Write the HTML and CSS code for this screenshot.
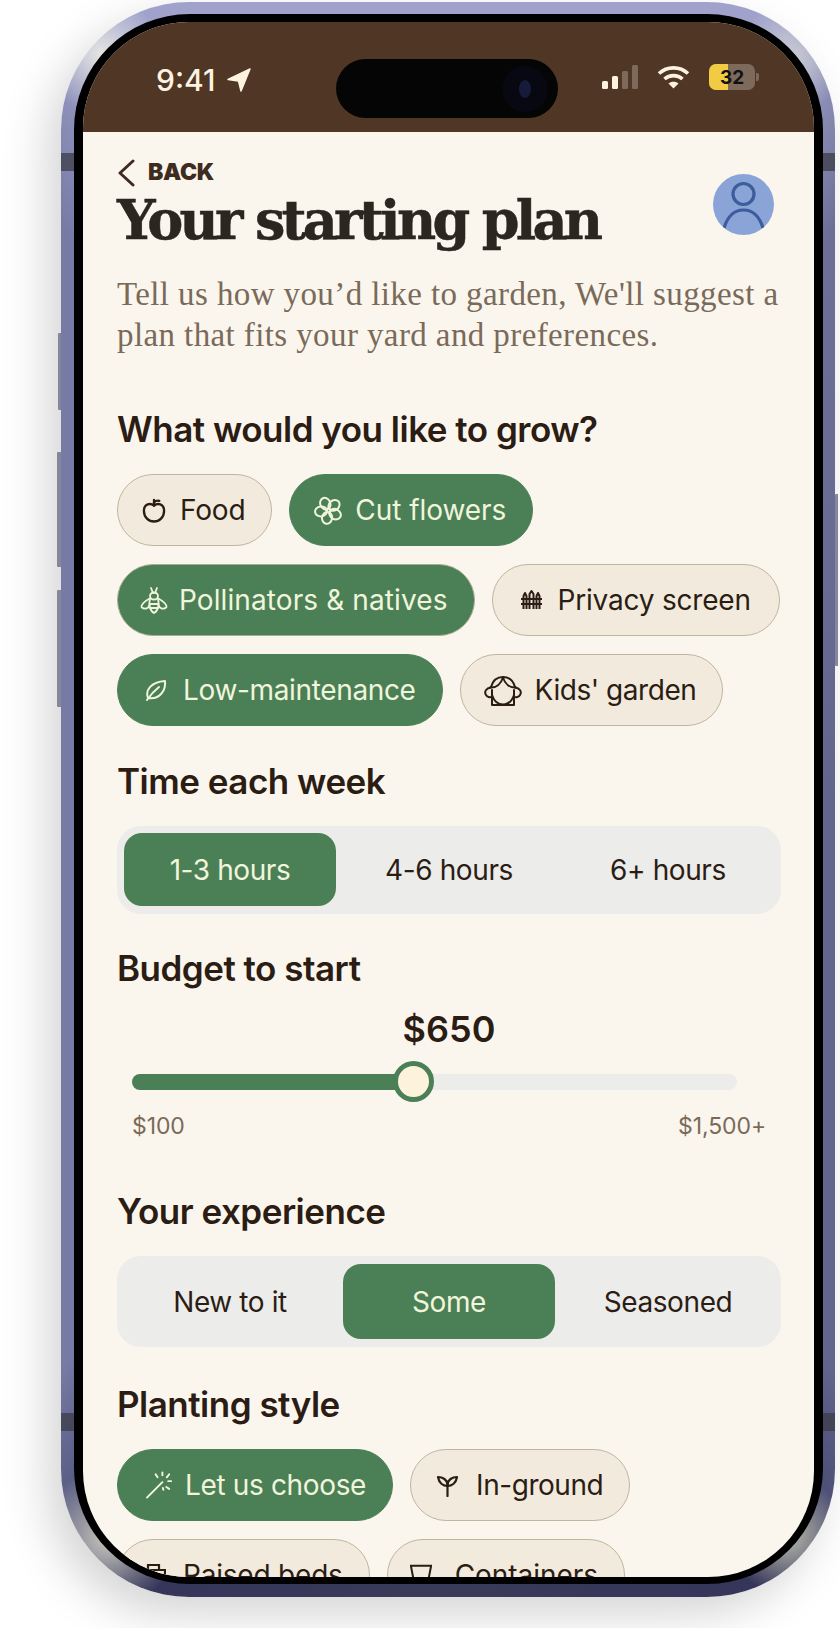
FILE: index.html
```html
<!DOCTYPE html>
<html lang="en">
<head>
<meta charset="utf-8">
<title>Your starting plan</title>
<link rel="stylesheet" href="styles.css">
</head>
<body>
<div class="stage">
  <div class="phone">
    <span class="btn btn-a"></span><span class="btn btn-b"></span><span class="btn btn-c"></span><span class="btn btn-d"></span>
    <span class="band band-tl"></span><span class="band band-tr"></span><span class="band band-bl"></span><span class="band band-br"></span>
    <div class="bezel">
      <div class="screen">
        <header class="status">
          <div class="status-left">
            <span class="clock">9:41</span>
            <svg class="loc" width="24" height="24" viewBox="0 0 24 24"><path d="M23 1 L1 11.5 L11.5 13 L14 23 Z" fill="currentColor" stroke="currentColor" stroke-width="1.5" stroke-linejoin="round"/></svg>
          </div>
          <div class="island"><span class="camera"><span class="lens"></span></span></div>
          <div class="status-right">
            <svg width="36" height="24" viewBox="0 0 36 24"><rect x="0" y="16" width="6" height="8" rx="1.5" fill="#fdf3e0"/><rect x="10" y="11" width="6" height="13" rx="1.5" fill="#fdf3e0"/><rect x="20" y="6" width="6" height="18" rx="1.5" fill="#7d6a5b"/><rect x="30" y="0" width="6" height="24" rx="1.5" fill="#7d6a5b"/></svg>
            <svg class="wifi" width="33" height="24" viewBox="0 0 33 24" fill="none" stroke="#fdf3e0" stroke-width="3.6"><path d="M2 8.5 C10 1 23 1 31 8.5"/><path d="M7.5 14 C12.5 9.5 20.5 9.5 25.5 14"/><path d="M16.5 23.5 L11.5 18.5 C14 16.3 19 16.3 21.5 18.5 Z" fill="#fdf3e0" stroke="none"/></svg>
            <div class="battery"><span class="battery-fill"></span><span class="battery-num">32</span><span class="battery-nub"></span></div>
          </div>
        </header>
        <main class="content">
          <div class="top">
            <div>
              <a class="back"><svg width="18" height="28" viewBox="0 0 18 28" fill="none" stroke="currentColor" stroke-width="3" stroke-linecap="round" stroke-linejoin="round"><path d="M16 2 L3 14 L16 26"/></svg><span>BACK</span></a>
              <h1 class="title">Your starting plan</h1>
            </div>
            <div class="avatar"><svg width="61" height="61" viewBox="0 0 61 61" fill="none" stroke="#3c5c9c" stroke-width="3.2"><circle cx="30.5" cy="20" r="10.5"/><path d="M11 54 C15 41 22 36 30.5 36 C39 36 46 41 50 54"/></svg></div>
          </div>
          <p class="lede">Tell us how you’d like to garden, We'll suggest a plan that fits your yard and preferences.</p>

          <h2 class="heading h-grow">What would you like to grow?</h2>
          <div class="chips">
            <span class="chip"><svg class="i-food" width="24" height="26" viewBox="0 0 25 26" fill="none" stroke="currentColor" stroke-width="2.4" stroke-linecap="round" stroke-linejoin="round"><path d="M12.5 8.500 C9 5.500 2 6 2 14 C2 20.500 7 25 12.500 25 C18 25 23 20.500 23 14 C23 6 16 5.500 12.500 8.500 Z"/><path d="M12.500 8.500 V2.500"/><path d="M12.500 5 C14 3.500 16 3 18 3.500"/></svg>Food</span>
            <span class="chip on chip-loose"><svg class="i-cut" width="29" height="29" viewBox="0 0 29 29" fill="none" stroke="currentColor" stroke-width="2"><ellipse cx="14.500" cy="7" rx="5" ry="6" transform="rotate(-25 14.500 14.500)"/><ellipse cx="14.500" cy="7" rx="5" ry="6" transform="rotate(47 14.500 14.500)"/><ellipse cx="14.500" cy="7" rx="5" ry="6" transform="rotate(119 14.500 14.500)"/><ellipse cx="14.500" cy="7" rx="5" ry="6" transform="rotate(191 14.500 14.500)"/><ellipse cx="14.500" cy="7" rx="5" ry="6" transform="rotate(263 14.500 14.500)"/><circle cx="14.500" cy="14.500" r="2"/></svg>Cut flowers</span>
            <span class="chip on chip-wide"><svg class="i-bee" width="28" height="27" viewBox="0 0 28 27" fill="none" stroke="currentColor" stroke-width="1.800" stroke-linecap="round" stroke-linejoin="round"><path d="M11 1 L13 6 M17 1 L15 6"/><ellipse cx="14" cy="9" rx="4" ry="3.500"/><path d="M10.500 11 C7 13 3 15 1.500 19 C1 21 4 22 6.500 21.500 C8 21 9 20 9.500 18"/><path d="M17.500 11 C21 13 25 15 26.500 19 C27 21 24 22 21.500 21.500 C20 21 19 20 18.500 18"/><path d="M10 12.500 C8.500 17 10 24 14 26 C18 24 19.500 17 18 12.500"/><path d="M9.500 17 H18.500 M10 21 H18"/></svg>Pollinators &amp; natives</span>
            <span class="chip chip-fence"><svg class="i-fence" width="21" height="20" viewBox="0 0 21 20" fill="none" stroke="currentColor" stroke-width="2" stroke-linejoin="round"><path d="M2.500 19 V6 L4 3 L5.500 6 V19 M8.500 19 V4 L10.500 1 L12.500 4 V19 M15.500 19 V6 L17 3 L18.500 6 V19"/><path d="M0 9 H21 M0 14 H21"/></svg>Privacy screen</span>
            <span class="chip on chip-snug"><svg class="i-leaf" width="22" height="22" viewBox="0 0 22 22" fill="none" stroke="currentColor" stroke-width="2" stroke-linejoin="round" stroke-linecap="round"><path d="M3 19 C0 11 6 3 20 2 C21 12 14 21 3 19 Z"/><path d="M2 21 C6 15 9 12 14 8"/></svg>Low-maintenance</span>
            <span class="chip chip-tight"><svg class="i-kids" width="38" height="31" viewBox="0 0 38 31" fill="none" stroke="currentColor" stroke-width="2" stroke-linejoin="round" stroke-linecap="round"><path d="M7 12 C9 5 14 2 19 2 C24 2 29 5 31 12"/><path d="M19 2.500 C17 9 12 13 6 12.500"/><path d="M19 2.500 C21 9 26 13 32 12.500"/><path d="M7 12.500 C2 13 0 17 2 20 C3 22 6 23 8 21.500"/><path d="M31 12.500 C36 13 38 17 36 20 C35 22 32 23 30 21.500"/><path d="M8 15 V30 H30 V15"/><path d="M8 20 C10 26 14 29.500 19 29.500 C24 29.500 28 26 30 20"/></svg>Kids' garden</span>
          </div>

          <h2 class="heading h-time">Time each week</h2>
          <div class="seg">
            <span class="seg-item on">1-3 hours</span>
            <span class="seg-item">4-6 hours</span>
            <span class="seg-item">6+ hours</span>
          </div>

          <h2 class="heading h-budget">Budget to start</h2>
          <div class="budget">$650</div>
          <div class="slider"><span class="slider-fill"></span><span class="thumb"></span></div>
          <div class="range"><span>$100</span><span>$1,500+</span></div>

          <h2 class="heading h-exp">Your experience</h2>
          <div class="seg seg-tall">
            <span class="seg-item">New to it</span>
            <span class="seg-item on">Some</span>
            <span class="seg-item">Seasoned</span>
          </div>

          <h2 class="heading h-style">Planting style</h2>
          <div class="chips">
            <span class="chip on chip-snug"><svg class="i-wand" width="29" height="30" viewBox="0 0 30 30" fill="none" stroke="currentColor" stroke-width="2" stroke-linecap="round"><path d="M2 28 L18 12"/><path d="M18 2 V5 M27 11 H24 M11 4 L13 7 M25 19 L22 17 M25 4 L22.500 7 M19 20 L18.500 18"/></svg>Let us choose</span>
            <span class="chip chip-tight"><svg class="i-sprout" width="21" height="23" viewBox="0 0 21 23" fill="none" stroke="currentColor" stroke-width="2.200" stroke-linecap="round" stroke-linejoin="round"><path d="M10.500 22 V10"/><path d="M10.500 12 C6 12 2 9 1 3 C6 3 10 6 10.500 10"/><path d="M10.500 12 C15 12 19 9 20 3 C15 3 11 6 10.500 10"/></svg>In-ground</span>
            <span class="chip"><svg class="i-bed" width="25" height="24" viewBox="0 0 25 24" fill="none" stroke="currentColor" stroke-width="2.200"><path d="M1 7 H24 V23 H1 Z M1 12 H24"/><path d="M7 7 V2 H18 V7"/></svg>Raised beds</span>
            <span class="chip chip-loose"><svg class="i-pot" width="22" height="24" viewBox="0 0 24 24" fill="none" stroke="currentColor" stroke-width="2.200"><path d="M1 2 H23 L19 23 H5 Z"/></svg>Containers</span>
          </div>
        </main>
      </div>
    </div>
  </div>
</div>
</body>
</html>
```

FILE: styles.css
```css
* { box-sizing: border-box; }
html, body { margin: 0; padding: 0; background: #fff; }
body { font-family: Inter, "Liberation Sans", sans-serif; width: 840px; height: 1628px; overflow: hidden; }
.stage { padding: 2px 5px 0 61px; }
.phone {
  position: relative;
  width: 774px;
  height: 1595px;
  border-radius: 128px;
  padding: 12px 12px 13px 13px;
  background:
    radial-gradient(60px 60px at 40px 52px, rgba(232, 232, 228, .95), rgba(232, 232, 228, 0)),
    radial-gradient(55px 55px at 728px 58px, rgba(210, 212, 214, .9), rgba(210, 212, 214, 0)),
    radial-gradient(70px 70px at 48px 1535px, rgba(212, 210, 196, .95), rgba(212, 210, 196, 0)),
    radial-gradient(60px 60px at 725px 1532px, rgba(196, 196, 176, .95), rgba(196, 196, 176, 0)),
    conic-gradient(from 0deg at 50% 50%,
      #a0a2cb 0deg, #a0a2cb 24deg, #6d7096 34deg, #62658c 90deg, #62658c 146deg,
      #34355a 158deg, #3a3b58 180deg, #34355a 202deg,
      #767aa4 214deg, #767aa4 270deg, #767aa4 326deg, #a0a2cb 336deg, #a0a2cb 360deg);
  box-shadow: -14px 18px 46px rgba(0, 0, 0, .17);
}
.btn { position: absolute; background: #85869c; width: 3px; border-radius: 1px 0 0 1px; }
.btn-a { left: -3px; top: 331px; height: 77px; }
.btn-b { left: -4px; top: 450px; height: 115px; width: 4px; }
.btn-c { left: -4px; top: 588px; height: 117px; width: 4px; }
.btn-d { right: -3px; top: 492px; height: 172px; }
.band { position: absolute; width: 13px; height: 18px; background: rgba(60, 60, 72, .75); }
.band-tl { left: 0; top: 151px; }
.band-tr { right: 0; top: 151px; }
.band-bl { left: 0; top: 1411px; }
.band-br { right: 0; top: 1411px; }
.bezel { height: 100%; padding: 8px 9px 7px 9px; background: #000; border-radius: 116px; position: relative; }
.screen { height: 100%; border-radius: 106px; overflow: hidden; background: #fbf6ed; }

.status { height: 110px; background: #4f3625; color: #fdf3e0; display: flex; align-items: flex-start; position: relative; padding: 0 59px 0 73px; justify-content: space-between; }
.status-left { display: flex; align-items: center; gap: 12px; margin-top: 40px; }
.clock { font-size: 30px; font-weight: 500; line-height: 36px; }
.island { position: absolute; left: 253px; top: 37px; width: 222px; height: 59px; background: #050505; border-radius: 30px; display: flex; justify-content: flex-end; align-items: center; padding-right: 10px; }
.camera { width: 46px; height: 46px; border-radius: 50%; background: #070812; display: flex; align-items: center; justify-content: center; }
.lens { width: 12px; height: 18px; border-radius: 50%; background: #161b3c; }
.status-right { display: flex; align-items: center; gap: 19px; margin-top: 42px; }
.wifi { display: block; }
.battery { position: relative; width: 46px; height: 26px; background: #7d6a5b; border-radius: 7px; overflow: visible; display: flex; align-items: center; justify-content: center; }
.battery-fill { position: absolute; left: 0; top: 0; bottom: 0; width: 19px; background: #f2cb45; border-radius: 7px 0 0 7px; }
.battery-num { position: relative; font-size: 19px; font-weight: 700; color: #111; line-height: 1; }
.battery-nub { position: absolute; right: -4px; top: 9px; width: 3px; height: 8px; background: #7d6a5b; border-radius: 0 2px 2px 0; }

.content { padding: 27px 30px 0 34px; }
.top { display: flex; justify-content: space-between; align-items: flex-start; }
.back { display: flex; align-items: center; gap: 13px; color: #3f2c20; height: 27px; }
.back span { font-size: 23px; font-weight: 900; letter-spacing: -.3px; line-height: 27px; }
.title { margin: 6px 0 0; font-family: "DejaVu Serif", serif; font-weight: 700; font-size: 54px; line-height: 56px; letter-spacing: -3.7px; color: #2a2620; white-space: nowrap; -webkit-text-stroke: .5px #2a2620; }
.avatar { width: 61px; height: 61px; border-radius: 50%; background: #8aa4d8; overflow: hidden; margin: 15px 10px 0 0; }
.avatar svg { display: block; }
.lede { margin: 26px 3px 0 0; font-family: "Liberation Serif", serif; font-size: 33px; line-height: 41px; color: #7a6a5a; letter-spacing: .4px; }
.heading { margin: 0; font-size: 35px; font-weight: 600; line-height: 40px; color: #2b1d14; letter-spacing: -.5px; }
.h-grow { margin-top: 53px; }
.h-time { margin-top: 35px; }
.h-budget { margin-top: 34px; }
.h-exp { margin-top: 51px; }
.h-style { margin-top: 37px; }

.chips { display: flex; flex-wrap: wrap; gap: 18px 17px; margin-top: 25px; }
.chip { display: inline-flex; align-items: center; gap: 11px; height: 72px; padding: 0 26px 0 22px; border-radius: 36px; background: #f2ebdd; border: 1.5px solid #bfb49f; font-size: 28px; line-height: 1; color: #2b1d14; white-space: nowrap; letter-spacing: -.2px; }
.chip.on { background: #4b7f56; border-color: #4b7f56; color: #f0f5dc; }
.chip.chip-wide { letter-spacing: .1px; border-color: #a9ad8f; }
.chip-loose { letter-spacing: -.05px; }
.chip-snug { letter-spacing: -.35px; }
.chip-tight { letter-spacing: -.45px; }
.chip-fence { padding-right: 28px; }
.i-food { margin: 0 3px 0 2px; }
.i-cut { margin: 0 1px 0 2px; }
.i-fence { margin: 0 5px 0 6px; }
.i-leaf { margin: 0 5px 0 5px; }
.i-kids { margin: 0 2px 0 1px; }
.i-wand { margin: 0 0 0 5px; }
.i-sprout { margin: 0 7px 0 4px; }
.i-bed { margin: 0 6px 0 1px; }
.i-pot { margin: 0 12px 0 0; }

.seg { display: grid; grid-template-columns: repeat(3, 1fr); gap: 7px; padding: 7px 7px 8px; height: 88px; margin: 25px 3px 0 0; background: #ececea; border-radius: 24px; }
.seg-tall { height: 91px; padding: 8px 7px; margin-top: 25px; }
.seg-item { display: flex; align-items: center; justify-content: center; font-size: 28px; color: #2b1d14; border-radius: 18px; letter-spacing: -.4px; }
.seg-item.on { background: #4b7f56; color: #f0f5dc; }

.budget { text-align: center; margin: 19px 3px 0 0; font-size: 36px; font-weight: 600; line-height: 44px; color: #2b1d14; }
.slider { position: relative; height: 16px; margin: 23px 47px 0 15px; background: #ececea; border-radius: 8px; }
.slider-fill { position: absolute; left: 0; top: 0; bottom: 0; width: 281px; background: #4b7f56; border-radius: 8px 0 0 8px; }
.thumb { position: absolute; left: 261px; top: -13px; width: 41px; height: 41px; border-radius: 50%; background: #fdf3dc; border: 5px solid #4b7f56; }
.range { display: flex; justify-content: space-between; margin: 22px 18px 0 15px; font-size: 23px; line-height: 28px; color: #7a6a5a; letter-spacing: -.1px; }
```
